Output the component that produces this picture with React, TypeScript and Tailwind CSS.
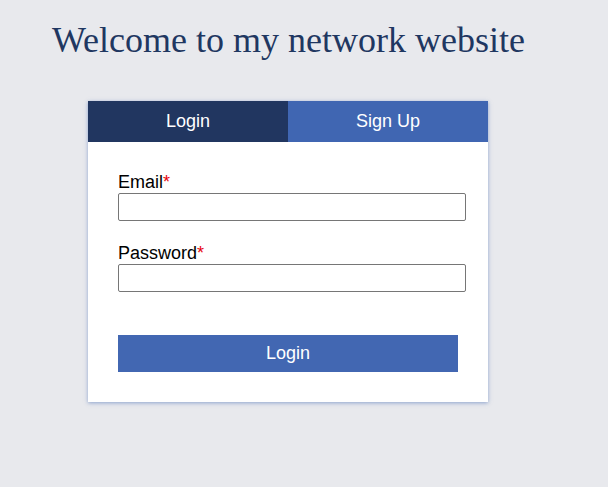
import { useState } from "react";

export default function App() {
  const [tab, setTab] = useState<"login" | "signup">("login");

  return (
    <div className="min-h-[487px] w-full bg-[#e8e9ed] font-['Liberation_Sans',Arial,sans-serif]">
      <h1 className="pl-[52px] pt-[20px] font-['Liberation_Serif','Times_New_Roman',serif] text-[36px] leading-[40px] text-[#1f3761]">
        Welcome to my network website
      </h1>
      <div className="ml-[88px] mt-[41px] w-[400px] shadow-[0_1px_4px_rgba(66,103,178,0.55)]">
        <div className="flex h-[41px]">
          <button
            onClick={() => setTab("login")}
            className="flex-1 bg-[#213660] text-[18px] text-white"
          >
            Login
          </button>
          <button
            onClick={() => setTab("signup")}
            className="flex-1 bg-[#4066b2] text-[18px] text-white"
          >
            Sign Up
          </button>
        </div>
        <form className="bg-white pb-[30px] pl-[30px] pr-[22px] pt-[30px]" onSubmit={(e) => e.preventDefault()}>
          <label className="block text-[18px] leading-[21px] text-black">
            Email<span className="text-red-600">*</span>
          </label>
          <input
            type="email"
            className="block h-[28px] w-[348px] rounded-[2px] border border-[#767676] bg-white"
          />
          <label className="mt-[22px] block text-[18px] leading-[21px] text-black">
            Password<span className="text-red-600">*</span>
          </label>
          <input
            type="password"
            className="block h-[28px] w-[348px] rounded-[2px] border border-[#767676] bg-white"
          />
          <button className="mt-[43px] block h-[37px] w-[340px] bg-[#4267b2] text-[18px] text-white">
            {tab === "login" ? "Login" : "Sign Up"}
          </button>
        </form>
      </div>
    </div>
  );
}
